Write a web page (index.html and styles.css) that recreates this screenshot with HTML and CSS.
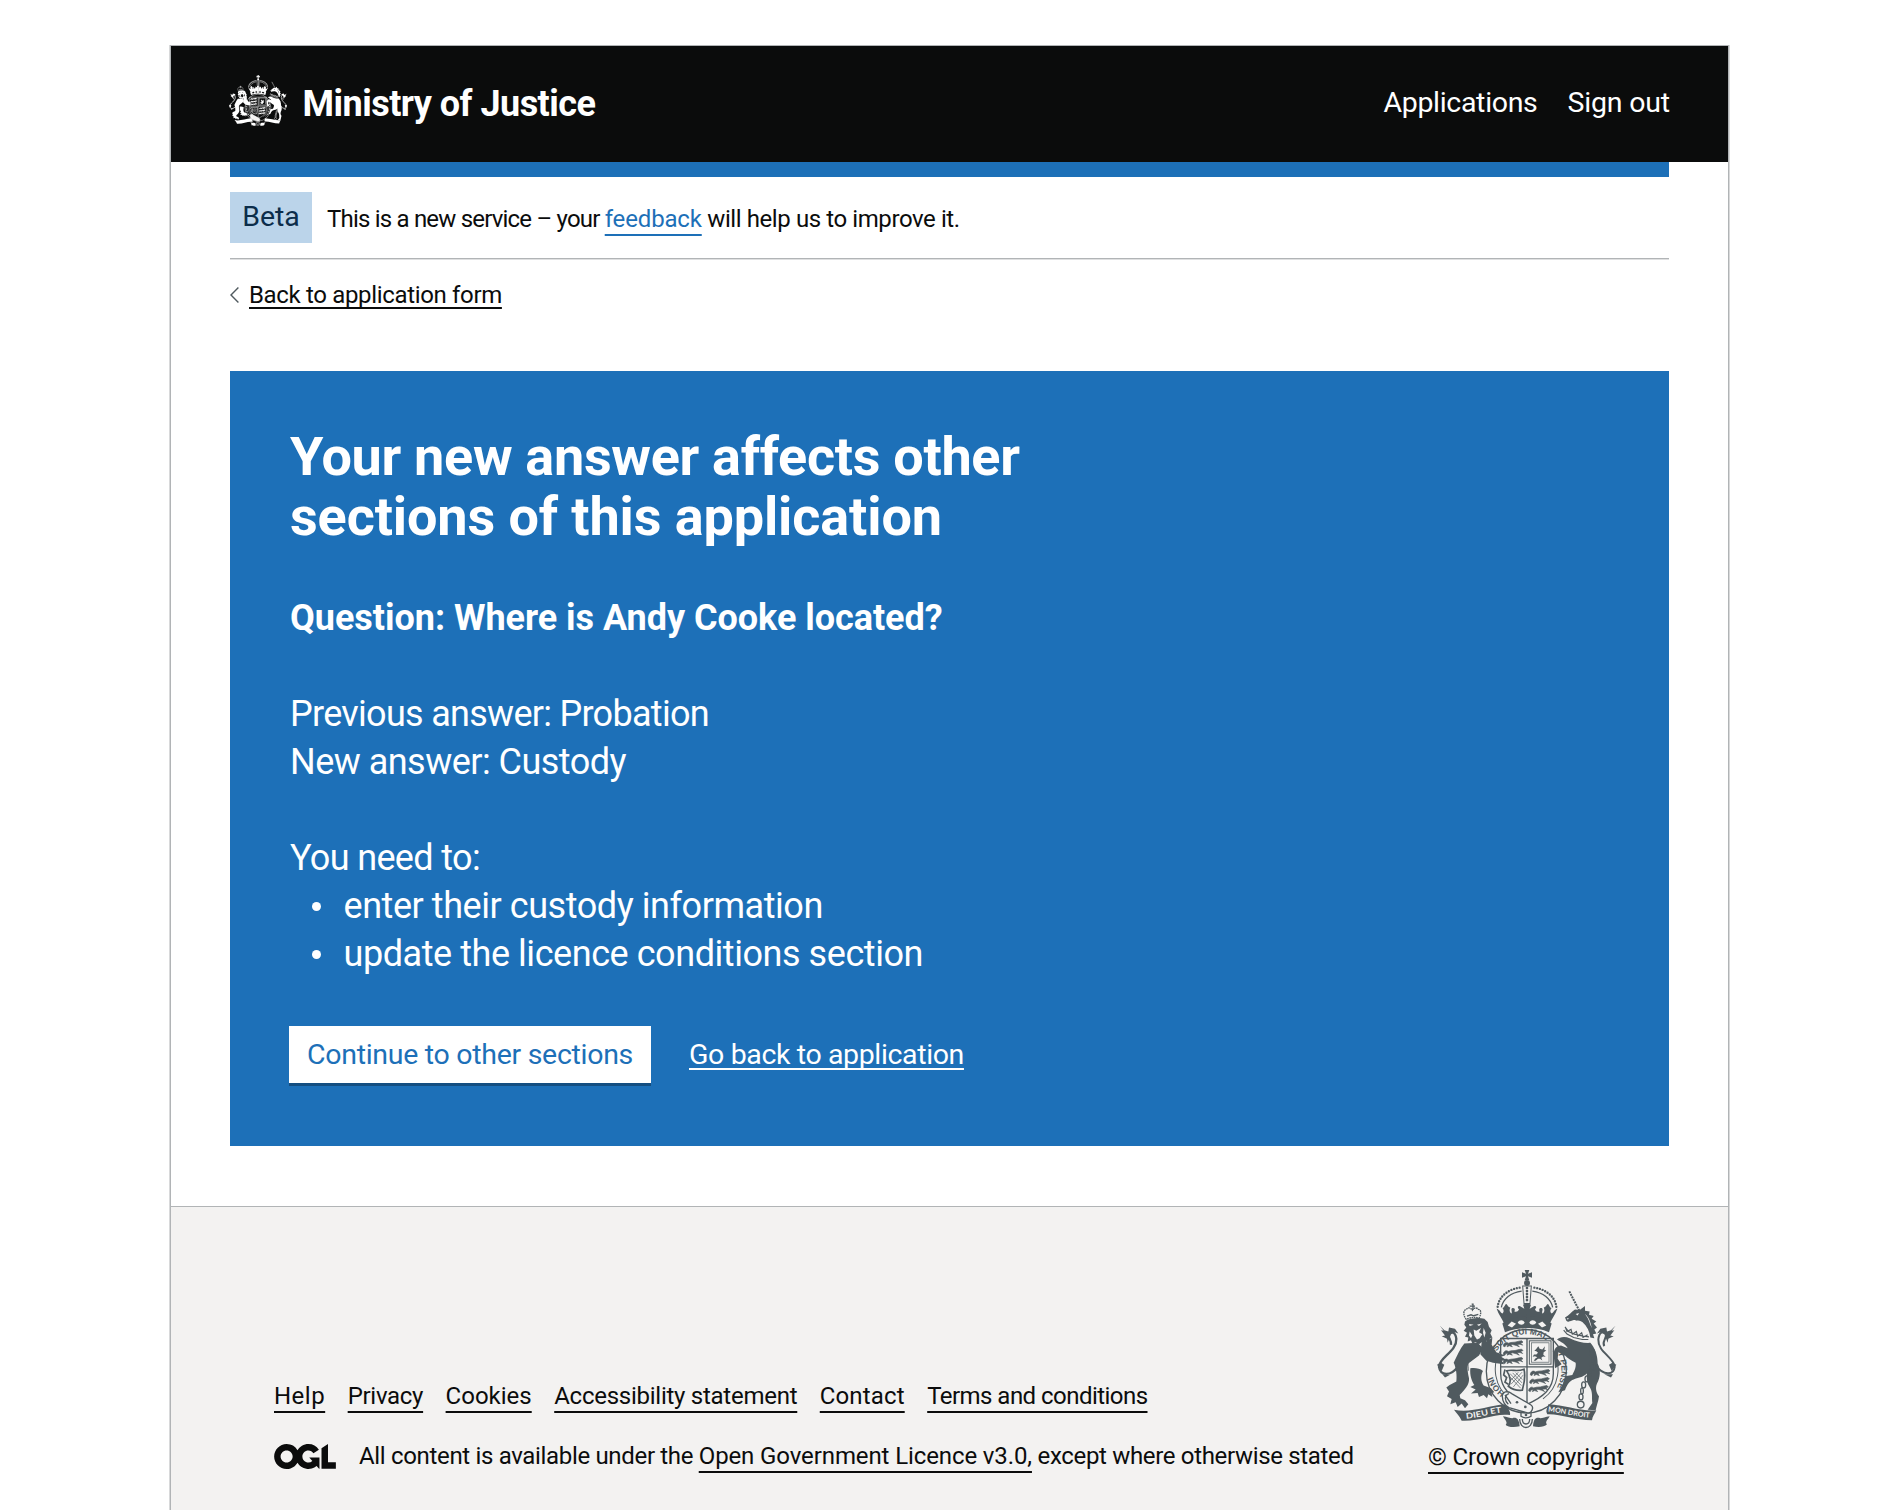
FILE: index.html
```html
<!DOCTYPE html>
<html lang="en">
<head>
<meta charset="utf-8">
<title>Your new answer affects other sections of this application</title>
<link rel="stylesheet" href="styles.css">
</head>
<body>
<svg class="defs" width="0" height="0" aria-hidden="true">
  <defs>
    <!-- half of the crown, mirrored for the other side -->
    <g id="crown-half">
      <path d="M262 170C266 136 300 114 336 112" fill="none" stroke="currentColor" stroke-width="7" stroke-linecap="round" stroke-dasharray="0 8.5"/>
      <path d="M273 172C278 146 302 127 334 123" fill="none" stroke="currentColor" stroke-width="4"/>
      <path d="M259 176C268 178 270 188 276 190C282 186 280 178 276 174C284 172 282 164 288 162C293 165 292 171 300 172C296 180 298 188 304 190C306 184 300 178 306 174C312 172 316 178 312 184C320 186 322 184 326 178C320 172 322 168 328 168L342 176L338 164L350 158V206C320 206 298 212 282 222C276 206 264 192 259 176Z" fill="currentColor"/>
      <path fill-rule="evenodd" d="M350 198C322 198 296 206 276 220L284 246C304 238 326 234 350 234ZM292 226l12-12 13 7-12 11ZM322 217c6-9 16-9 21 0c-4 9-15 9-21 0Z" fill="currentColor"/>
    </g>
    <g id="lions">
      <path d="M2 10c5-7 10-6 14-3l8-2 12-1 12-3 8-1 4 4-7 3 6 6-8-3-9 1 7 7-9-4-11-3-6 1 5 6-9-3-7 3 3-6-7 1-2 5-5-2z" fill="currentColor" stroke="currentColor" stroke-width="2"/>
    </g>
    <g id="crest">
      <!-- crown -->
      <path d="M343 60h14l-4 11 12-4v16l-12-4 4 12h-14l4-12-12 4V67l12 4z" fill="currentColor"/>
      <circle cx="350" cy="99" r="9" fill="currentColor"/>
      <path d="M337 108h26l-4 52h-18z" fill="none" stroke="currentColor" stroke-width="3"/>
      <path d="M350 114v44" stroke="currentColor" stroke-width="8" stroke-linecap="round" stroke-dasharray="0 9"/>
      <use href="#crown-half"/>
      <use href="#crown-half" transform="matrix(-1 0 0 1 700 0)"/>
      <!-- garter -->
      <ellipse cx="348" cy="363" rx="120" ry="125" fill="none" stroke="currentColor" stroke-width="4"/>
      <path d="M270 302C244 345 250 410 300 446M428 302C454 345 448 410 398 446" fill="none" stroke="currentColor" stroke-width="3"/>
      <!-- shield -->
      <path d="M271 265H429V370C429 415 400 440 350 462C300 440 271 415 271 370Z" fill="none" stroke="currentColor" stroke-width="4"/>
      <path d="M350 265V458M271 350H429" stroke="currentColor" stroke-width="4"/>
      <use href="#lions" x="278" y="272"/><use href="#lions" x="278" y="297"/><use href="#lions" x="278" y="322"/>
      <use href="#lions" x="359" y="358"/><use href="#lions" x="357" y="382"/><use href="#lions" x="354" y="406"/>
      <rect x="357" y="272" width="65" height="70" fill="none" stroke="currentColor" stroke-width="3"/>
      <rect x="363" y="278" width="53" height="58" fill="none" stroke="currentColor" stroke-width="2"/>
      <path d="M384 288l4 8 8 2 8-10-2 11 6 2-8 5-1 8 7 6-8-1-5 4 3 8-7-5-6 0-7 6-6 0 5-7 6-4-7-3-7 2 4-7 7 0 5-5-5-5-6-1 5-5z" fill="currentColor"/>
      <path d="M289 362c16-6 30 4 52-5 5 20 0 45-5 63-18 2-32-4-42-12 10-12 5-32-5-46z" fill="none" stroke="currentColor" stroke-width="5"/>
      <path d="M299 370l34 36M307 368l28 30M316 367l20 21M299 380l32 34M335 366l-33 36M339 374l-30 36M324 366l-24 26" stroke="currentColor" stroke-width="2"/>
      <path d="M284 358l-4 16 9 8-5 14 10 6" fill="none" stroke="currentColor" stroke-width="5"/>
      <!-- lion supporter -->
      <g transform="translate(78 54)">
        <path d="M90 154C80 142 80 126 90 124C96 116 104 120 108 126C112 118 122 118 126 124C134 124 136 136 128 150C114 146 102 148 90 154Z" fill="none" stroke="currentColor" stroke-width="4" stroke-dasharray="5 2"/>
        <path d="M106 108h4v18M100 114h16M92 144l12-4 8 3 14-4" fill="none" stroke="currentColor" stroke-width="4"/>
        <path fill-rule="evenodd" d="M86 160C100 150 126 148 144 152L154 162L158 176L166 186L162 196L168 208L160 212L162 222L150 218L146 230L136 222L128 228L118 222L108 226L104 216L94 220L96 208L86 206L92 194L82 188L90 178L84 170ZM98 168l14 2-12 4zM122 170l14-4-8 8zM112 184l8 4 14-8-6 12 10 6-8 12-8 4-8-12zM100 190l8 12-4 8-6-8zM142 180l6 14-4 14-4-14z" fill="currentColor"/>
        <path d="M84 226C72 240 62 262 52 284C60 300 62 324 60 340L40 350L30 358L38 370L32 384L46 392L42 408L58 402L64 416L76 406L86 420L96 408L86 396L72 390L70 380C84 366 100 350 98 330C94 310 92 298 96 286L128 262L140 240L124 224Z" fill="currentColor"/>
        <path d="M136 222C150 222 160 214 168 208L166 230L180 252L206 262L194 266L212 276L196 278L204 288L186 286L170 284L150 278L132 258Z" fill="currentColor"/>
        <path d="M102 300C116 298 130 300 140 308C132 322 134 340 142 352L164 360L174 372L166 374L168 386L156 378L152 390L142 380L128 386L124 374L104 376L118 364L102 356L114 350C106 338 100 322 102 300Z" fill="currentColor"/>
        <path d="M96 284c-2 8 2 16 0 24" stroke="currentColor" stroke-width="2" fill="none"/>
      </g>
      <!-- lion tail -->
      <path d="M142 350C120 380 90 376 86 350C86 322 140 304 138 266C136 246 122 240 112 252C116 266 124 272 122 284" fill="none" stroke="currentColor" stroke-width="7"/>
      <path d="M88 226l14 14 12 4 2-12 18 4 10 14-10-4-12 6-10 26-2-12-16-8 10-2-12-16 8 2zM80 344l12-6 10 6-8 18zM96 372l8 10 14-8z" fill="currentColor"/>
      <!-- unicorn supporter -->
      <path d="M477 124L508 184" stroke="currentColor" stroke-width="6" stroke-dasharray="6 2.500"/>
      <g transform="translate(348 54)">
        <path fill-rule="evenodd" d="M146 124L160 126L176 114L176 128L190 130L188 140L202 144L196 152L210 160L202 166L212 178L204 184L210 196L200 198L204 210L192 208C190 190 182 174 168 162C160 156 152 160 142 156C134 158 126 164 120 158L116 148C128 142 134 132 146 124ZM148 138l10-3-4 7zM121 151l6-1-2 5zM176 138c10 8 18 24 20 42l-5-12c-3-12-9-22-15-30z" fill="currentColor"/>
        <path d="M116 176L126 190L144 198L170 204L188 206M112 186L122 198L142 208L168 214L186 214M118 180l4 10 12-6 4 14 12-8 4 14 12-10 4 14 14-8" fill="none" stroke="currentColor" stroke-width="3.500"/>
        <path d="M92 214C100 206 116 204 130 210C150 220 176 226 192 224C206 240 214 262 214 286C224 306 222 328 212 346C206 360 210 374 218 384C216 400 210 414 208 426L184 424L198 404C196 384 200 372 190 356C182 346 180 330 182 316C170 328 154 328 142 334C130 338 122 350 116 366L96 372L110 346L116 324L138 320C142 312 150 300 148 284C134 276 124 270 116 262L96 252L94 272L106 288L86 300L82 262C82 240 92 232 104 232L124 240C116 226 104 222 92 214Z" fill="currentColor"/>
      </g>
      <!-- unicorn tail -->
      <path d="M556 346C580 376 610 376 613 350C612 322 562 306 564 268C566 246 578 240 588 252C586 270 574 276 582 288" fill="none" stroke="currentColor" stroke-width="6"/>
      <path d="M616 226l-14 14-12 4-2-12-18 4-10 14 10-4 12 6 10 26 2-12 16-8-10-2 12-16-8 2zM618 344l-12-6-10 6 8 18zM608 372l-6 10-20-10z" fill="currentColor"/>
      <!-- chain -->
      <g class="crest-chain" stroke="currentColor" stroke-width="4">
        <ellipse cx="546" cy="308" rx="7" ry="11"/><ellipse cx="551" cy="330" rx="5" ry="10"/><ellipse cx="546" cy="350" rx="7" ry="10"/><ellipse cx="538" cy="368" rx="5" ry="9"/><ellipse cx="530" cy="386" rx="6" ry="9"/><ellipse cx="520" cy="404" rx="6" ry="9"/><ellipse cx="515" cy="422" rx="4" ry="9"/><ellipse cx="512" cy="440" rx="6" ry="9"/><circle cx="511" cy="463" r="10"/>
      </g>
      <!-- motto scroll -->
      <path d="M131 478C180 490 230 466 286 462C292 474 302 484 299 494C250 488 210 514 154 511C148 496 138 488 131 478Z" fill="currentColor"/>
      <path d="M558 480C510 484 464 464 414 462C412 474 404 480 411 492C450 490 494 510 545 510C546 498 554 490 558 480Z" fill="currentColor"/>
      <path d="M278 498C290 500 300 504 306 504C316 500 326 504 328 528C310 532 292 530 286 524C294 514 282 508 278 498ZM418 498C406 500 396 504 390 504C378 500 370 504 368 528C386 532 402 530 410 522C402 514 414 508 418 498Z" fill="currentColor"/>
      <!-- strap and buckle -->
      <path d="M276 438c0-14 16-18 28-8l58 34c10 6 2 26-10 24l-56-16c-12-4-20-20-20-34z" class="crest-strap" stroke="currentColor" stroke-width="4"/>
      <path d="M296 430c-14 4-14 22-2 32M284 434l18 26M332 484v14c8 6 22 6 30 0v-12M328 506c0 34 38 34 38 0M336 506c0 20 22 20 22 0" fill="none" stroke="currentColor" stroke-width="4"/>
      <circle cx="320" cy="456" r="4" fill="currentColor"/><circle cx="345" cy="470" r="4" fill="currentColor"/><circle cx="347" cy="494" r="4" fill="currentColor"/>
    </g>
  </defs>
</svg>

<div class="page">
  <header class="header">
    <div class="brand">
      <svg class="brand-crest" viewBox="80 60 537 473" preserveAspectRatio="none" aria-hidden="true">
        <use href="#crest"/>
        <path d="M250 300C226 350 244 420 276 440M446 300C470 350 452 420 420 440" fill="none" stroke="currentColor" stroke-width="9" stroke-dasharray="9 7"/>
      </svg>
      <span class="brand-name">Ministry of Justice</span>
    </div>
    <nav class="nav">
      <a class="nav-applications" href="#">Applications</a>
      <a class="nav-signout" href="#">Sign out</a>
    </nav>
  </header>

  <main class="main">
    <div class="bar"></div>
    <div class="phase">
      <strong class="tag">Beta</strong>
      <span class="phase-text"><span class="phase-a">This is a new service – your </span><a class="phase-link" href="#">feedback</a><span class="phase-b"> will help us to improve it.</span></span>
    </div>
    <div class="back">
      <svg class="back-icon" viewBox="0 0 9 16" aria-hidden="true"><path d="M8.400 .6L1 8l7.400 7.400" fill="none" stroke="#505a5f" stroke-width="1.400"/></svg>
      <a class="back-link" href="#">Back to application form</a>
    </div>

    <section class="panel">
      <h1 class="title"><span class="title-a">Your new answer affects other</span><br><span class="title-b">sections of this application</span></h1>
      <h2 class="question">Question: Where is Andy Cooke located?</h2>
      <p class="text"><span class="prev">Previous answer: Probation</span><br><span class="new">New answer: Custody</span></p>
      <p class="text need">You need to:</p>
      <ul class="list">
        <li>enter their custody information</li>
        <li>update the licence conditions section</li>
      </ul>
      <div class="actions">
        <a class="button" href="#">Continue to other sections</a>
        <a class="cancel" href="#">Go back to application</a>
      </div>
    </section>
  </main>

  <footer class="footer">
    <div class="footer-main">
      <nav class="footer-links">
        <a class="f-help" href="#">Help</a>
        <a class="f-privacy" href="#">Privacy</a>
        <a class="f-cookies" href="#">Cookies</a>
        <a class="f-access" href="#">Accessibility statement</a>
        <a class="f-contact" href="#">Contact</a>
        <a class="f-terms" href="#">Terms and conditions</a>
      </nav>
      <div class="licence">
        <svg class="ogl" viewBox="0 0 483.2 195.7" aria-hidden="true"><path fill="currentColor" d="M421.5 142.8V.1l-50.7 32.3v161.1h112.4v-50.7zm-122.3-9.6A47.12 47.12 0 0 1 221 97.8c0-26 21.1-47.1 47.1-47.1 16.7 0 31.4 8.7 39.7 21.8l42.700-27.200A97.630 97.630 0 0 0 268.1 0c-36.5 0-68.3 20.1-85.1 49.7A98 98 0 0 0 97.8 0C43.9 0 0 43.9 0 97.8s43.9 97.8 97.8 97.8c36.5 0 68.3-20.1 85.1-49.7a97.760 97.760 0 0 0 149.6 25.4l19.4 22.2h3v-87.8h-80l24.3 27.500zM97.8 145c-26 0-47.1-21.1-47.1-47.1s21.1-47.1 47.1-47.1 47.1 21.1 47.1 47.1S123.8 145 97.8 145"/></svg>
        <span class="licence-text"><span class="l-a">All content is available under the </span><a class="l-b" href="#">Open Government Licence v3.0,</a><span class="l-c"> except where otherwise stated</span></span>
      </div>
    </div>
    <div class="copyright">
      <svg class="footer-crest" viewBox="80 60 537 473" preserveAspectRatio="none" aria-hidden="true">
        <use href="#crest"/>
        <defs>
          <path id="garter-left" d="M284 428A100 106 0 0 1 242 320"/>
          <path id="garter-top" d="M258 306A106 108 0 0 1 436 298"/>
          <path id="garter-right" d="M434 296A100 106 0 0 1 382 460"/>
          <path id="scroll-left" d="M168 505C210 502 246 488 282 486"/>
          <path id="scroll-right" d="M413 484C450 486 494 500 542 502"/>
        </defs>
        <text class="garter"><textPath href="#garter-left">HONI</textPath></text>
        <text class="garter"><textPath href="#garter-top" startOffset="2">SOIT QUI MAL</textPath></text>
        <text class="garter"><textPath href="#garter-right" startOffset="14">Y PENSE</textPath></text>
        <text class="motto"><textPath href="#scroll-left" textLength="108" lengthAdjust="spacingAndGlyphs">DIEU ET</textPath></text>
        <text class="motto motto-right"><textPath href="#scroll-right" textLength="126" lengthAdjust="spacingAndGlyphs">MON DROIT</textPath></text>
      </svg>
      <a class="copyright-link" href="#">© Crown copyright</a>
    </div>
  </footer>
</div>
</body>
</html>
```
FILE: styles.css
```css
* { box-sizing: border-box; }

body {
  margin: 0;
  background: #fff;
  color: #0b0c0c;
  font: 24px/30px Roboto, "Liberation Sans", sans-serif;
}

.defs { position: absolute; }

h1, h2, p, ul { margin: 0; padding: 0; }

a {
  color: inherit;
  text-decoration: underline;
  text-decoration-thickness: 1.5px;
  text-decoration-skip-ink: none;
  text-underline-offset: 7px;
  white-space: nowrap;
}

.page {
  width: 1559px;
  height: 1465px;
  margin: 45px 0 0 170px;
  border: 1px solid #b1b4b6;
  border-bottom: 0;
  box-shadow: -1px 0 #d8d9da, 1px 0 #d8d9da;
  display: flex;
  flex-direction: column;
}

.header {
  height: 116px;
  flex: none;
  padding: 0 59px;
  background: #0b0c0c;
  color: #fff;
  display: flex;
  justify-content: space-between;
  align-items: flex-start;
}

.brand { display: flex; align-items: flex-start; gap: 13.5px; margin-left: -1px; padding-top: 29px; }
.brand-crest { width: 58px; height: 51px; color: #fff; }
.brand-name { font-size: 36px; line-height: 48px; font-weight: 700; letter-spacing: -.52px; margin-top: 5px; padding-left: 2px; }

.nav { display: flex; gap: 30px; margin-right: -1px; font-size: 28.5px; line-height: 36px; padding-top: 39px; }
.nav a { text-decoration: none; }
.nav-applications { letter-spacing: -.32px; }
.nav-signout { letter-spacing: -.18px; }

.main { padding: 0 59px; }
.bar { height: 15px; background: #1d70b8; }

.phase {
  display: flex;
  align-items: flex-start;
  gap: 15px;
  padding: 15px 0;
  border-bottom: 1px solid #b1b4b6;
  box-shadow: 0 1px #dfe0e1;
}
.tag { width: 82px; height: 51px; padding-top: 7px; text-align: center; font-weight: 400; font-size: 28.5px; line-height: 36px; background: #bbd4ea; color: #0c2d4a; }
.phase-text { white-space: pre; padding-top: 12px; }
.phase-a { letter-spacing: -.8px; }
.phase-link { color: #1d70b8; letter-spacing: -.16px; }
.phase-b { letter-spacing: -.41px; }

.back { display: flex; align-items: center; gap: 10px; margin-top: 21px; }
.back-icon { width: 9px; height: 16px; }
.back-link { letter-spacing: -.34px; text-underline-offset: 4px; }

.panel { height: 775px; margin-top: 61px; padding: 56px 60px 0; background: #1d70b8; color: #fff; }
.title { font-size: 54px; line-height: 60px; font-weight: 700; }
.title-a { letter-spacing: -.31px; }
.title-b { letter-spacing: -.12px; }
.question { margin-top: 47px; font-size: 36px; line-height: 48px; font-weight: 700; letter-spacing: -.03px; }
.text { margin-top: 48px; font-size: 36px; line-height: 48px; }
.prev { letter-spacing: -.71px; }
.new { letter-spacing: -.52px; }
.need { letter-spacing: -.65px; }
.list { list-style: none; font-size: 36px; line-height: 48px; letter-spacing: -.44px; }
.list li { display: flex; align-items: center; gap: 22.5px; padding-left: 22px; }
.list li::before { content: ""; width: 9px; height: 9px; border-radius: 50%; background: #fff; }

.actions { display: flex; align-items: flex-start; gap: 38px; margin-top: 48px; font-size: 28.5px; line-height: 36px; }
.button { width: 362px; height: 57px; margin-left: -1px; padding-top: 11px; text-align: center; letter-spacing: -.29px; text-decoration: none; background: #fff; color: #1d70b8; box-shadow: 0 3px #144e81; }
.cancel { padding-top: 11px; letter-spacing: -.37px; text-underline-offset: 4px; }

.footer {
  flex: 1;
  margin-top: 60px;
  padding: 63px 0 0 103px;
  border-top: 1px solid #b1b4b6;
  background: #f3f2f1;
  display: flex;
}
.footer-main { width: 1154px; flex: none; padding-top: 111px; }
.footer-links { display: flex; gap: 22.5px; }
.f-help { letter-spacing: .5px; }
.f-privacy { letter-spacing: -.3px; }
.f-access { letter-spacing: -.26px; }
.f-contact { letter-spacing: .15px; }
.f-terms { letter-spacing: -.54px; }
.licence { display: flex; align-items: center; gap: 23px; margin-top: 30px; white-space: pre; }
.ogl { width: 62px; height: 25px; }
.l-a { letter-spacing: -.33px; }
.l-b { letter-spacing: -.11px; }
.l-c { letter-spacing: -.33px; }

.copyright { display: flex; flex-direction: column; }
.footer-crest { width: 179px; height: 158px; margin-left: 9px; color: #505a5f; overflow: visible; }
.copyright-link { margin-top: 14px; letter-spacing: -.17px; }

.crest-strap { fill: #f3f2f1; }
.crest-chain { fill: none; }
.brand-crest .crest-strap { fill: #0b0c0c; }
.garter { font: 700 25px "Liberation Sans", sans-serif; fill: currentColor; }
.motto { font: 700 24px Lato, sans-serif; fill: #f3f2f1; }
.motto-right { font-size: 21px; }
```
